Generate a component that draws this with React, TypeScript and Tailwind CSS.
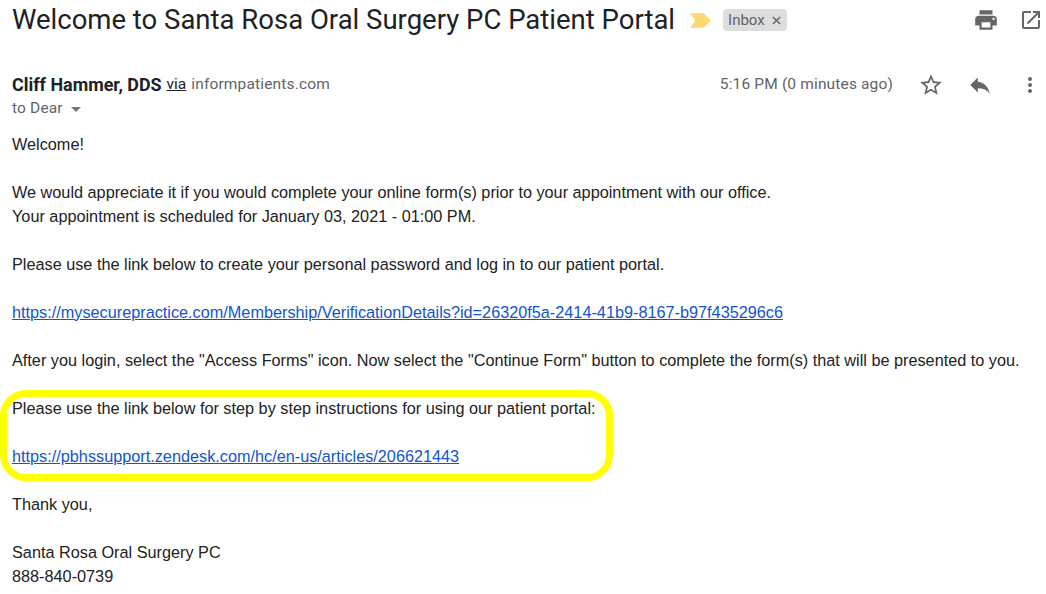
import React from "react";

function Line(props: { children?: React.ReactNode }) {
  return <div className="h-6 whitespace-nowrap text-[16.25px] leading-6">{props.children || "\u00a0"}</div>;
}

function Link(props: { href: string }) {
  return <a href={props.href} className="text-[#1155cc] underline">{props.href}</a>;
}

export default function App() {
  return (
    <div className="h-[594px] w-[1046px] overflow-hidden bg-white font-['Liberation_Sans',sans-serif] text-[#222222]">
      <div className="flex h-[40px] items-center pl-3 pr-[3px]">
        <h1 className="font-['Roboto',sans-serif] text-[27.5px] font-normal leading-[40px] text-[#202124]">
          Welcome to Santa Rosa Oral Surgery PC Patient Portal
        </h1>
        <svg viewBox="0 0 20 14" className="ml-[15px] h-[15px] w-[21px]">
          <path d="M0 0H13L20 7L13 14H0L5 7Z" fill="#fbd873" />
        </svg>
        <span className="ml-3 flex h-[22px] items-center rounded-[4px] bg-[#dddddd] pl-[5px] pr-[6px] font-['Roboto',sans-serif] text-[15px] text-[#5f6368]">
          Inbox
          <svg viewBox="0 0 10 10" className="ml-[7px] h-[9px] w-[9px]">
            <path d="M1 1L9 9M9 1L1 9" stroke="#5f6368" strokeWidth="1.6" />
          </svg>
        </span>
        <svg viewBox="0 0 24 24" className="ml-auto h-[26px] w-[26px]" fill="#666666">
          <path d="M19 8H5c-1.66 0-3 1.34-3 3v6h4v4h12v-4h4v-6c0-1.66-1.34-3-3-3zm-3 11H8v-5h8v5zm3-7c-.55 0-1-.45-1-1s.45-1 1-1 1 .45 1 1-.45 1-1 1zm-1-9H6v4h12V3z" />
        </svg>
        <svg viewBox="0 0 24 24" className="ml-5 h-6 w-6" fill="#666666">
          <path d="M19 19H5V5h7V3H5c-1.11 0-2 .9-2 2v14c0 1.1.89 2 2 2h14c1.1 0 2-.9 2-2v-7h-2v7zM14 3v2h3.59l-9.83 9.83 1.41 1.41L19 6.41V10h2V3h-7z" />
        </svg>
      </div>

      <div className="mt-[33px] flex h-6 items-center pl-3 font-['Roboto',sans-serif]">
        <span className="text-[17.9px] font-bold text-[#202124]">Cliff Hammer, DDS</span>
        <span className="ml-[5px] text-[15.5px] text-[#202124] underline">via</span>
        <span className="ml-[5px] text-[15.5px] tracking-[0.15px] text-[#5f6368]">informpatients.com</span>
        <span className="ml-auto text-[15.5px] tracking-[0.15px] text-[#5f6368]">5:16 PM (0 minutes ago)</span>
        <svg viewBox="0 0 24 24" className="ml-[25px] h-[26px] w-[26px]" fill="#666666">
          <path d="M22 9.24l-7.19-.62L12 2 9.19 8.63 2 9.24l5.46 4.73L5.82 21 12 17.27 18.18 21l-1.63-7.03L22 9.24zM12 15.4l-3.76 2.27 1-4.28-3.32-2.88 4.38-.38L12 6.1l1.71 4.04 4.38.38-3.32 2.88 1 4.28L12 15.4z" />
        </svg>
        <svg viewBox="0 0 24 24" className="ml-[23px] h-[26px] w-[26px]" fill="#666666">
          <path d="M10 9V5l-7 7 7 7v-4.1c5 0 8.5 1.6 11 5.1-1-5-4-10-11-11z" />
        </svg>
        <svg viewBox="0 0 24 24" className="ml-[25px] mr-1 h-6 w-6" fill="#666666">
          <path d="M12 8c1.1 0 2-.9 2-2s-.9-2-2-2-2 .9-2 2 .9 2 2 2zm0 2c-1.1 0-2 .9-2 2s.9 2 2 2 2-.9 2-2-.9-2-2-2zm0 6c-1.1 0-2 .9-2 2s.9 2 2 2 2-.9 2-2-.9-2-2-2z" />
        </svg>
      </div>

      <div className="flex h-6 items-center pl-3 font-['Roboto',sans-serif] text-[15.5px] tracking-[0.15px] text-[#5f6368]">
        to Dear
        <span className="ml-2 mt-[1px] h-0 w-0 border-x-[5px] border-t-[5px] border-x-transparent border-t-[#777777]" />
      </div>

      <div className="relative mt-[11px] pl-3">
        <Line>Welcome!</Line>
        <Line />
        <Line>We would appreciate it if you would complete your online form(s) prior to your appointment with our office.</Line>
        <Line>Your appointment is scheduled for January 03, 2021 - 01:00 PM.</Line>
        <Line />
        <Line>Please use the link below to create your personal password and log in to our patient portal.</Line>
        <Line />
        <Line><Link href="https://mysecurepractice.com/Membership/VerificationDetails?id=26320f5a-2414-41b9-8167-b97f435296c6" /></Line>
        <Line />
        <Line>After you login, select the "Access Forms" icon. Now select the "Continue Form" button to complete the form(s) that will be presented to you.</Line>
        <Line />
        <Line>Please use the link below for step by step instructions for using our patient portal:</Line>
        <Line />
        <Line><Link href="https://pbhssupport.zendesk.com/hc/en-us/articles/206621443" /></Line>
        <Line />
        <Line>Thank you,</Line>
        <Line />
        <Line>Santa Rosa Oral Surgery PC</Line>
        <Line>888-840-0739</Line>
        <div className="absolute left-0 top-[258px] h-[91px] w-[613px] rounded-[26px] border-[7px] border-[#ffff00]" />
      </div>
    </div>
  );
}
